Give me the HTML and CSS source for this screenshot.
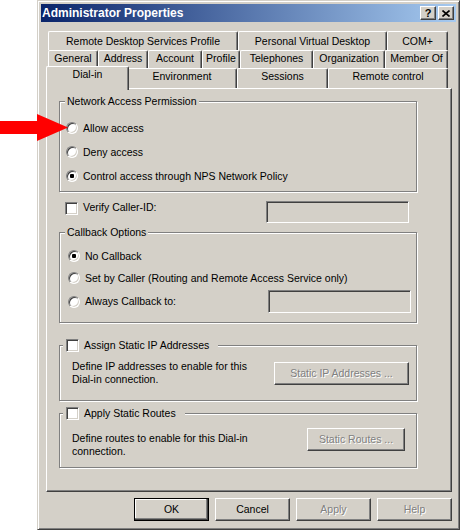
FILE: index.html
```html
<!DOCTYPE html>
<html>
<head>
<meta charset="utf-8">
<link rel="stylesheet" href="styles.css">
</head>
<body>
<svg class="arrow" width="70" height="150" viewBox="0 0 70 150"><polygon points="0,121 37,121 37,114 68,127.5 37,141 37,134 0,134" fill="#ff0000"/></svg>
<div class="window">
  <div class="titlebar">
    <span class="title">Administrator Properties</span>
    <div class="tbtn q">?</div>
    <div class="tbtn"><svg width="8" height="7" viewBox="0 0 8 7"><path d="M0.5 0.5 L7.5 6.5 M7.5 0.5 L0.5 6.5" stroke="#000" stroke-width="1.6" fill="none"/></svg></div>
  </div>
  <div class="tabs">
    <div class="tabrow r1">
      <div class="tab">Remote Desktop Services Profile</div>
      <div class="tab">Personal Virtual Desktop</div>
      <div class="tab">COM+</div>
    </div>
    <div class="tabrow r2">
      <div class="tab">General</div>
      <div class="tab">Address</div>
      <div class="tab">Account</div>
      <div class="tab">Profile</div>
      <div class="tab">Telephones</div>
      <div class="tab">Organization</div>
      <div class="tab">Member Of</div>
    </div>
    <div class="tabrow r3">
      <div class="tab sel">Dial-in</div>
      <div class="tab w-env">Environment</div>
      <div class="tab w-ses">Sessions</div>
      <div class="tab w-rc">Remote control</div>
    </div>
  </div>
  <div class="panel">
    <div class="group net">
      <div class="legend">Network Access Permission</div>
      <div class="opts">
        <div class="opt"><span class="radio"></span>Allow access</div>
        <div class="opt"><span class="radio"></span>Deny access</div>
        <div class="opt"><span class="radio on"></span>Control access through NPS Network Policy</div>
      </div>
    </div>
    <div class="verify">
      <span class="check"></span><span class="lbl">Verify Caller-ID:</span>
      <span class="field"></span>
    </div>
    <div class="group cb">
      <div class="legend">Callback Options</div>
      <div class="opts">
        <div class="opt"><span class="radio on"></span>No Callback</div>
        <div class="opt o2"><span class="radio"></span>Set by Caller (Routing and Remote Access Service only)</div>
        <div class="opt o3"><span class="radio"></span>Always Callback to:<span class="field f2"></span></div>
      </div>
    </div>
    <div class="group ip">
      <div class="legend cl"><span class="check"></span>Assign Static IP Addresses</div>
      <div class="desc-row">
        <div class="desc">Define IP addresses to enable for this<br>Dial-in connection.</div>
        <div class="btn disabled b-ip">Static IP Addresses ...</div>
      </div>
    </div>
    <div class="group rt">
      <div class="legend cl"><span class="check"></span>Apply Static Routes</div>
      <div class="desc-row">
        <div class="desc">Define routes to enable for this Dial-in<br>connection.</div>
        <div class="btn disabled b-rt">Static Routes ...</div>
      </div>
    </div>
  </div>
  <div class="buttons">
    <div class="btn default">OK</div>
    <div class="btn">Cancel</div>
    <div class="btn disabled">Apply</div>
    <div class="btn disabled">Help</div>
  </div>
</div>
</body>
</html>
```
FILE: styles.css
```css
* { box-sizing: border-box; }
body {
  margin: 0;
  background: #fff;
  font-family: "Liberation Sans", Arial, sans-serif;
  font-size: 10.5px;
  line-height: 13px;
  color: #000;
}
.arrow { position: absolute; left: 0; top: 0; z-index: 5; }

.window {
  margin-left: 37px;
  width: 423px;
  height: 530px;
  background: #d4d0c8;
  border: 1px solid;
  border-color: #d4d0c8 #404040 #404040 #d4d0c8;
  box-shadow: inset 1px 1px #fff, inset -1px -1px #808080;
  padding: 3px;
  display: flex;
  flex-direction: column;
}

.titlebar {
  height: 18px;
  background: linear-gradient(to right, #0a246a, #a6caf0);
  display: flex;
  align-items: center;
  padding: 0 2px 0 1px;
}
.title { color: #fff; font-weight: bold; font-size: 12px; flex: 1; white-space: nowrap; }
.tbtn {
  width: 16px; height: 14px;
  background: #d4d0c8;
  border: 1px solid;
  border-color: #fff #404040 #404040 #fff;
  box-shadow: inset -1px -1px #808080;
  display: flex; align-items: center; justify-content: center;
  font-weight: bold; font-size: 11px;
}
.tbtn.q { margin-right: 2px; }

.tabs { margin: 9px 0 0 5px; }
.tabrow { margin-left: 2px; width: 400px; }
.r1 { display: grid; grid-template-columns: 190px 149px 61px; height: 19px; }
.r2 { display: grid; grid-template-columns: 50px 50px 54px 38px 73px 72px 63px; height: 18px; }
.r3 { display: flex; height: 20px; }
.tab {
  background: #d4d0c8;
  border-top: 1px solid #fff;
  border-left: 1px solid #fff;
  border-right: 1px solid #404040;
  box-shadow: inset -1px 0 #808080;
  border-radius: 2px 2px 0 0;
  display: flex; justify-content: center; align-items: flex-start;
  white-space: nowrap;
  padding-top: 1px;
}
.r1 .tab { padding-top: 3px; }
.tab.sel {
  width: 83px;
  margin: -2px -2px -2px -2px;
  height: 24px;
  position: relative;
  z-index: 2;
}
.w-env { width: 110px; }
.w-ses { width: 91px; }
.w-rc { width: 120px; }

.panel {
  margin: 0 4px 0 5px;
  height: 404px;
  border: 1px solid;
  border-color: #fff #404040 #404040 #fff;
  box-shadow: inset -1px -1px #808080;
  padding: 12px 0 0 12px;
}

.group {
  width: 358px;
  border: 1px solid #808080;
  box-shadow: inset 1px 1px #fff, 1px 1px #fff;
}
.legend {
  width: fit-content;
  height: 13px;
  background: #d4d0c8;
  margin: -7px 0 0 5px;
  padding: 0 2px;
  display: flex; align-items: center;
  white-space: nowrap;
}
.legend.cl { margin-left: 3px; padding: 0 9px 0 3px; }
.legend.cl .check { margin-right: 5px; }

.opts { display: flex; flex-direction: column; }
.opt { display: flex; align-items: center; height: 16px; white-space: nowrap; }
.net .opts { padding: 12px 0 7px 6px; gap: 8px; }
.cb .opts { padding: 9px 5px 9px 8px; }
.cb .o2 { margin-top: 6px; }
.cb .o3 { margin-top: 4px; height: 23px; }

.radio {
  width: 12px; height: 12px;
  border-radius: 50%;
  background: #fff;
  border: 1px solid;
  border-color: #808080 #fff #fff #808080;
  box-shadow: inset 1px 1px #404040, inset -1px -1px #d4d0c8;
  position: relative;
  flex: none;
  margin-right: 5px;
}
.radio.on::after {
  content: "";
  position: absolute;
  left: 3px; top: 3px;
  width: 4px; height: 4px;
  border-radius: 1px;
  background: #000;
}
.check {
  width: 13px; height: 13px;
  background: #fff;
  border: 1px solid;
  border-color: #808080 #fff #fff #808080;
  box-shadow: inset 1px 1px #404040, inset -1px -1px #d4d0c8;
  flex: none;
}
.field {
  width: 143px; height: 22px;
  background: #d4d0c8;
  border: 1px solid;
  border-color: #808080 #fff #fff #808080;
  box-shadow: inset 1px 1px #404040, inset -1px -1px #d4d0c8;
  flex: none;
}
.field.f2 { height: 23px; margin-left: auto; }

.verify {
  display: flex; align-items: flex-start;
  margin-top: 9px;
  width: 350px;
  padding-left: 6px;
}
.verify .check { margin-top: 1px; margin-right: 5px; }
.verify .field { margin-left: auto; }

.cb { margin-top: 9px; }
.ip { margin-top: 22px; }
.rt { margin-top: 12px; }

.btn {
  width: 75px; height: 23px;
  background: #d4d0c8;
  border: 1px solid;
  border-color: #fff #404040 #404040 #fff;
  box-shadow: inset -1px -1px #808080;
  display: flex; align-items: center; justify-content: center;
  white-space: nowrap;
  flex: none;
}
.btn.default {
  border-color: #000;
  box-shadow: inset -1px -1px #404040, inset -2px -2px #808080, inset 1px 1px #fff;
}
.disabled { color: #808080; text-shadow: 1px 1px 0 #fff; }

.desc-row { display: flex; align-items: flex-start; padding-left: 12px; }
.desc { white-space: nowrap; }
.ip .desc-row { padding-right: 7px; padding-bottom: 14px; }
.ip .desc { margin-top: 8px; }
.btn.b-ip { width: 135px; margin-top: 10px; margin-left: auto; }
.rt .desc-row { padding-right: 11px; padding-bottom: 9px; }
.rt .desc { margin-top: 12px; }
.btn.b-rt { width: 98px; margin-top: 8px; margin-left: auto; }

.buttons {
  display: flex; justify-content: flex-end; gap: 6px;
  margin-top: 6px;
  padding-right: 4px;
}
```
